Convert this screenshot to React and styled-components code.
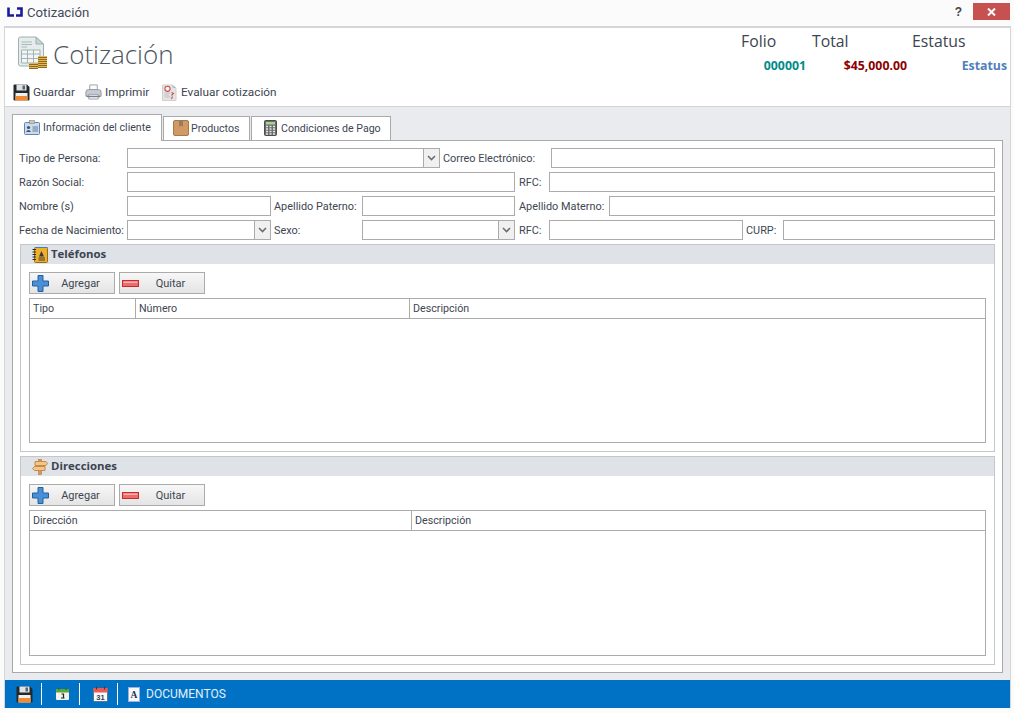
import React from "react";
import styled, { createGlobalStyle } from "styled-components";

const GlobalStyle = createGlobalStyle`
  html, body { margin: 0; padding: 0; background: #fbfbfb; overflow: hidden; }
  * { box-sizing: border-box; }
  body { font-family: Roboto, "Open Sans", "Liberation Sans", sans-serif; font-size: 11px; color: #444; }
`;

const Page = styled.div`
  width: 1014px;
  height: 713px;
  display: flex;
  flex-direction: column;
  background: #fbfbfb;
`;

const TitleBar = styled.div`
  height: 26px;
  display: flex;
  align-items: center;
  padding: 0 4px 2px 7px;
  flex-shrink: 0;
`;

const WindowTitle = styled.span`
  margin-left: 4px;
  font-size: 13.2px;
  color: #3f4a5a;
`;

const HelpButton = styled.span`
  margin-left: auto;
  margin-right: 11px;
  font-weight: 700;
  font-size: 12px;
  color: #444;
  font-family: "Liberation Sans", sans-serif;
`;

const CloseButton = styled.div`
  width: 37px;
  height: 17px;
  margin-bottom: 1px;
  background: #c75050;
  display: flex;
  align-items: center;
  justify-content: center;
`;

const Frame = styled.div`
  flex: 1;
  margin: 0 3px 5px 4px;
  border-top: 2px solid #d6d6d6;
  border-left: 1px solid #d6d6d6;
  border-right: 1px solid #d6d6d6;
  display: flex;
  flex-direction: column;
  min-height: 0;
`;

const Header = styled.div`
  height: 79px;
  background: #fff;
  border-bottom: 1px solid #d4d4d4;
  flex-shrink: 0;
  display: flex;
  flex-direction: column;
`;

const HeaderTop = styled.div`
  height: 50px;
  display: flex;
  justify-content: space-between;
  padding-left: 13px;
`;

const Heading = styled.div`
  display: flex;
  align-items: flex-start;
  gap: 6px;
  padding-top: 8px;
`;

const HeadingText = styled.h1`
  margin: 0;
  font-family: "Open Sans", sans-serif;
  font-size: 26px;
  line-height: 36px;
  font-weight: 300;
  color: #4d5560;
`;

const Summary = styled.div`
  width: 269px;
  padding-top: 3px;
`;

const SummaryRow = styled.div`
  display: flex;
`;

const SummaryLabel = styled.div`
  width: ${(p) => p.$w}px;
  font-family: "Open Sans", sans-serif;
  font-size: 15.8px;
  line-height: 20px;
  color: #3c4450;
`;

const SummaryValue = styled.div`
  width: ${(p) => p.$w}px;
  text-align: right;
  font-family: "Open Sans", sans-serif;
  font-size: 12.3px;
  font-weight: 700;
  line-height: 18px;
  margin-top: 6px;
  color: ${(p) => p.$color};
`;

const Toolbar = styled.div`
  height: 28px;
  display: flex;
  align-items: center;
  padding-left: 8px;
`;

const ToolButton = styled.div`
  width: ${(p) => p.$w}px;
  display: flex;
  align-items: center;
  gap: 3px;
  font-size: 11.8px;
  white-space: nowrap;
  color: #3e4652;
`;

const Content = styled.div`
  flex: 1;
  min-height: 0;
  background: #e9ebef;
  padding: 7px;
  display: flex;
  flex-direction: column;
`;

const Tabs = styled.div`
  display: flex;
  align-items: flex-end;
  height: 27px;
  margin-bottom: -1px;
  position: relative;
  z-index: 1;
`;

const Tab = styled.div`
  width: ${(p) => p.$w}px;
  height: ${(p) => (p.$active ? 27 : 25)}px;
  margin-right: 1px;
  background: #fff;
  border: 1px solid #a9a9a9;
  border-bottom: ${(p) => (p.$active ? "none" : "1px solid #a9a9a9")};
  display: flex;
  align-items: center;
  gap: ${(p) => p.$gap}px;
  padding: 0 0 ${(p) => (p.$active ? 2 : 1)}px ${(p) => p.$pad}px;
  font-size: 10.6px;
  white-space: nowrap;
  color: #3e4652;
`;

const Panel = styled.div`
  flex: 1;
  min-height: 0;
  background: #fff;
  border: 1px solid #a9a9a9;
  padding: 7px 6px 0 6px;
  display: flex;
  flex-direction: column;
`;

const FormRow = styled.div`
  display: flex;
  align-items: center;
  height: 20px;
  margin-bottom: 4px;
`;

const Label = styled.label`
  width: ${(p) => p.$w}px;
  padding-left: ${(p) => p.$pad || 0}px;
  flex-shrink: 0;
  font-size: 10.9px;
  white-space: nowrap;
  color: #3e4652;
`;

const Input = styled.div`
  width: ${(p) => p.$w}px;
  height: 20px;
  flex-shrink: 0;
  background: #fff;
  border: 1px solid #ababab;
`;

const Select = styled(Input)`
  display: flex;
  justify-content: flex-end;
`;

const SelectArrow = styled.div`
  width: 16px;
  height: 100%;
  background: #f0f0f0;
  border-left: 1px solid #ababab;
  display: flex;
  align-items: center;
  justify-content: center;
`;

const Group = styled.section`
  height: ${(p) => p.$h}px;
  margin: 0 1px 4px 1px;
  border: 1px solid #c3c7cc;
  display: flex;
  flex-direction: column;
  flex-shrink: 0;
`;

const GroupHeader = styled.div`
  height: 19px;
  background: #dfe3e8;
  display: flex;
  align-items: center;
  gap: 3px;
  padding-left: 11px;
  font-family: "Open Sans", sans-serif;
  font-size: 11.4px;
  font-weight: 700;
  color: #3c4450;
`;

const GroupTitle = styled.span`
  padding-bottom: 2px;
`;

const GroupBody = styled.div`
  flex: 1;
  min-height: 0;
  padding: 8px;
  display: flex;
  flex-direction: column;
`;

const ButtonRow = styled.div`
  display: flex;
  gap: 4px;
  margin-bottom: 4px;
`;

const Button = styled.button`
  width: 86px;
  height: 22px;
  padding: 0 2px 0 2px;
  border: 1px solid #ababab;
  background: linear-gradient(#f7f7f7, #e4e4e4);
  display: flex;
  align-items: center;
  font-family: inherit;
  font-size: 11px;
  color: #3e4652;
`;

const ButtonText = styled.span`
  flex: 1;
  text-align: center;
`;

const Table = styled.div`
  flex: 1;
  min-height: 0;
  border: 1px solid #ababab;
`;

const TableHead = styled.div`
  height: 20px;
  display: flex;
  border-bottom: 1px solid #ababab;
`;

const HeadCell = styled.div`
  width: ${(p) => p.$w}px;
  flex: ${(p) => (p.$w ? "none" : "1")};
  padding-left: 3px;
  font-size: 10.7px;
  line-height: 20px;
  color: #3e4652;
  border-right: ${(p) => (p.$w ? "1px solid #ababab" : "none")};
`;

const StatusBar = styled.div`
  height: 28px;
  flex-shrink: 0;
  background: #0072c6;
  display: flex;
  align-items: center;
  padding-left: 11px;
`;

const StatusItem = styled.div`
  width: ${(p) => p.$w}px;
  height: 22px;
  display: flex;
  align-items: center;
  padding-left: ${(p) => p.$pad}px;
  border-right: 1px solid #fff;
`;

const StatusText = styled.div`
  margin-left: 10px;
  display: flex;
  align-items: center;
  gap: 6px;
  font-size: 12px;
  color: #e2effa;
`;

const FloppyIcon = ({ size = 17 }) => (
  <svg width={size} height={size} viewBox="0 0 17 17">
    <path d="M0.5 1.5 Q0.5 0.5 1.5 0.5 H14 L16.5 3 V15.5 Q16.5 16.5 15.5 16.5 H1.5 Q0.5 16.5 0.5 15.5 Z" fill="#23282d" />
    <rect x="3.5" y="0.5" width="10" height="6" fill="#dfe3e6" />
    <rect x="9.5" y="1.5" width="2.5" height="4" fill="#59636b" />
    <rect x="2.5" y="9" width="12" height="7.5" fill="#f0f0f0" />
    <rect x="2.5" y="12" width="12" height="4.5" fill="#f08a32" />
  </svg>
);

const PrinterIcon = () => (
  <svg width="17" height="18" viewBox="0 0 18 18">
    <path d="M5 1.5 H13 V7 H5 Z" fill="#fbfbfb" stroke="#9aa2ac" />
    <path d="M1 9 Q1 6.5 3.5 6.5 H14.5 Q17 6.5 17 9 V13.5 H1 Z" fill="#c7ccd3" stroke="#8d95a0" />
    <path d="M4 11.5 H14 V16.5 H4 Z" fill="#f5f5f5" stroke="#9aa2ac" />
    <rect x="2" y="13" width="14" height="1.5" fill="#79818c" />
  </svg>
);

const EvaluateIcon = () => (
  <svg width="16" height="17" viewBox="0 0 16 17">
    <path d="M0.5 1 H10.5 L14 4 V16.5 H0.5 Z" fill="#e4e4e4" stroke="#d0d0d0" />
    <path d="M10.5 1 V4 H14" fill="#bdbdbd" />
    <circle cx="5.5" cy="4.8" r="2.6" fill="#f4f4f4" stroke="#c8504a" strokeWidth="1.1" />
    <path d="M2.5 9 H8 M2.5 11 H7 M2.5 13 H8.5" stroke="#c0c0c0" />
    <path d="M9.5 8.5 L11.5 9.5 L9.5 11.5 M10.5 12.5 L9.5 15" fill="none" stroke="#c8504a" strokeWidth="1.1" />
  </svg>
);

const coinRows = [
  [20, 20], [20, 22], [20, 24], [20, 26], [20, 28], [20, 30],
  [11, 27], [11, 29], [11, 31],
];

const QuoteIcon = () => (
  <svg width="29" height="33" viewBox="0 0 29 33">
    <path d="M0.5 3 Q0.5 1 2.5 1 H18 L25.5 8 V28 Q25.5 30 23.5 30 H2.5 Q0.5 30 0.5 28 Z" fill="#e6ecec" stroke="#9fb0b0" />
    <path d="M18 1 V8 H25.5 Z" fill="#c9d5d5" stroke="#9fb0b0" />
    <path d="M3.5 6 H14 M3.5 8.5 H14 M3.5 11 H9" stroke="#a9b8b8" />
    <path d="M3.5 14 H22 V27 H3.5 Z M3.5 18 H22 M3.5 22.5 H22 M9.5 14 V27 M15.5 14 V27" fill="#f2f6f6" stroke="#a3b2b2" />
    {coinRows.map(([x, y]) => (
      <g key={`${x}-${y}`}>
        <rect x={x} y={y} width="9" height="2" fill="#e2b955" />
        <rect x={x} y={y + 1} width="9" height="1" fill="#8f6a1e" />
      </g>
    ))}
  </svg>
);

const LogoIcon = () => (
  <svg width="16" height="11" viewBox="0 0 16 11">
    <path d="M1.5 0.5 V8.5 H7 M10 1.5 H14.5 V8.5 H9" fill="none" stroke="#1a1a9a" strokeWidth="2.6" />
  </svg>
);

const IdCardIcon = () => (
  <svg width="16" height="15" viewBox="0 0 16 15">
    <rect x="0.5" y="2.5" width="15" height="12" rx="1" fill="#c9dcf0" stroke="#5f86b3" />
    <rect x="5.5" y="0.5" width="5" height="3" fill="#c8c8b0" stroke="#7f8a8a" strokeWidth="0.6" />
    <circle cx="4.5" cy="7.5" r="1.6" fill="#44505e" />
    <path d="M2 12 Q4.5 8 7 12 Z" fill="#44505e" />
    <path d="M8.5 7 H14 M8.5 9 H14 M8.5 11 H14" stroke="#6a7b90" />
  </svg>
);

const BoxIcon = () => (
  <svg width="16" height="16" viewBox="0 0 16 16">
    <rect x="0.5" y="0.5" width="15" height="15" rx="1.5" fill="#cf9a66" stroke="#a8784a" />
    <path d="M6 0.5 H10 V7 L8 5.5 L6 7 Z" fill="#9d7a5a" />
  </svg>
);

const CalculatorIcon = () => (
  <svg width="13" height="16" viewBox="0 0 13 16">
    <rect x="0.5" y="0.5" width="12" height="15" rx="1" fill="#6b6f6e" stroke="#4a4d4c" />
    <rect x="2" y="2" width="9" height="2.5" fill="#a7d48e" />
    <path d="M2 6.5 H4 M5.5 6.5 H7.5 M9 6.5 H11 M2 9 H4 M5.5 9 H7.5 M9 9 H11 M2 11.5 H4 M5.5 11.5 H7.5 M9 11.5 H11 M2 14 H4 M5.5 14 H7.5 M9 14 H11" stroke="#e5e5e5" strokeWidth="1.4" />
  </svg>
);

const AddressBookIcon = () => (
  <svg width="16" height="16" viewBox="0 0 16 16">
    <rect x="2.5" y="0.5" width="13" height="15" rx="1" fill="#eeb02f" stroke="#9a6d14" />
    <path d="M3 0.5 H15.5" stroke="#3b82c4" />
    <path d="M0.5 2.5 H4 M0.5 5 H4 M0.5 7.5 H4 M0.5 10 H4 M0.5 12.5 H4" stroke="#2b2b2b" />
    <path d="M9.5 4 L12 9.5 H7 Z" fill="#3a3a3a" />
    <path d="M6.5 11 H13 M6.5 13 H13" stroke="#3a3a3a" />
  </svg>
);

const SignpostIcon = () => (
  <svg width="16" height="16" viewBox="0 0 16 16">
    <rect x="6.5" y="0.5" width="3" height="15" fill="#d99a58" stroke="#b37534" strokeWidth="0.6" />
    <path d="M3 2.5 H14 L15.5 4.5 L14 6.5 H3 Z" fill="#f0c58e" stroke="#c98a45" />
    <path d="M13 7.5 H2.5 L0.5 9.5 L2.5 11.5 H13 Z" fill="#f0c58e" stroke="#c98a45" />
  </svg>
);

const PlusIcon = () => (
  <svg width="17" height="17" viewBox="0 0 17 17">
    <path d="M6 0.5 H11 V6 H16.5 V11 H11 V16.5 H6 V11 H0.5 V6 H6 Z" fill="#4a90d9" stroke="#245f9f" />
  </svg>
);

const MinusIcon = () => (
  <svg width="17" height="7" viewBox="0 0 17 7">
    <rect x="0.5" y="0.5" width="16" height="6" fill="#ee6b6b" stroke="#c92a2a" />
    <rect x="1.5" y="1.5" width="14" height="1.5" fill="#f7b3b3" />
  </svg>
);

const ChevronIcon = () => (
  <svg width="9" height="6" viewBox="0 0 9 6">
    <path d="M1 1 L4.5 4.5 L8 1" fill="none" stroke="#6a6f75" strokeWidth="1.6" />
  </svg>
);

const GreenCalendarIcon = () => (
  <svg width="15" height="14" viewBox="0 0 15 14">
    <path d="M1 3 H14 V12 Q14 13 13 13 H2 Q1 13 1 12 Z" fill="#f3f3ee" />
    <rect x="1" y="2" width="13" height="3.5" fill="#5ba83c" />
    <path d="M4 0.5 V3 M11 0.5 V3" stroke="#2f6a20" strokeWidth="1.2" />
    <path d="M6.5 7 H8.5 V11 M6 11 H9.5" fill="none" stroke="#222" strokeWidth="1.2" />
  </svg>
);

const RedCalendarIcon = () => (
  <svg width="15" height="16" viewBox="0 0 15 16">
    <rect x="0.5" y="2" width="14" height="13.5" rx="1" fill="#fafafa" stroke="#4a5a6c" strokeWidth="0.7" />
    <rect x="0.5" y="2" width="14" height="4.5" fill="#e85c5c" />
    <path d="M3.5 0.5 V3.5 M11.5 0.5 V3.5" stroke="#6b2e2e" strokeWidth="1.2" />
    <text x="7.5" y="14" textAnchor="middle" fontSize="7.5" fontWeight="700" fontFamily="Liberation Sans, sans-serif" fill="#2c3e50">31</text>
  </svg>
);

const LetterIcon = () => (
  <svg width="12" height="15" viewBox="0 0 12 15">
    <rect x="0.5" y="0.5" width="11" height="14" fill="#f5f7fb" stroke="#9db2d6" />
    <text x="6" y="11" textAnchor="middle" fontSize="9.5" fontWeight="700" fontFamily="Liberation Serif, serif" fill="#24324a">A</text>
  </svg>
);

const PhoneColumns = [106, 274, 0];
const AddressColumns = [382, 0];

const DetailGroup = ({ title, icon, height, columns, headers }) => (
  <Group $h={height}>
    <GroupHeader>
      {icon}
      <GroupTitle>{title}</GroupTitle>
    </GroupHeader>
    <GroupBody>
      <ButtonRow>
        <Button>
          <PlusIcon />
          <ButtonText>Agregar</ButtonText>
        </Button>
        <Button>
          <MinusIcon />
          <ButtonText>Quitar</ButtonText>
        </Button>
      </ButtonRow>
      <Table>
        <TableHead>
          {headers.map((h, i) => (
            <HeadCell key={h} $w={columns[i]}>
              {h}
            </HeadCell>
          ))}
        </TableHead>
      </Table>
    </GroupBody>
  </Group>
);

const Dropdown = ({ w }) => (
  <Select $w={w}>
    <SelectArrow>
      <ChevronIcon />
    </SelectArrow>
  </Select>
);

export default function App() {
  return (
    <Page>
      <GlobalStyle />
      <TitleBar>
        <LogoIcon />
        <WindowTitle>Cotización</WindowTitle>
        <HelpButton>?</HelpButton>
        <CloseButton>
          <svg width="9" height="8" viewBox="0 0 9 8">
            <path d="M1 0.5 L8 7.5 M8 0.5 L1 7.5" stroke="#fff" strokeWidth="2" />
          </svg>
        </CloseButton>
      </TitleBar>
      <Frame>
        <Header>
          <HeaderTop>
            <Heading>
              <QuoteIcon />
              <HeadingText>Cotización</HeadingText>
            </Heading>
            <Summary>
              <SummaryRow>
                <SummaryLabel $w={71}>Folio</SummaryLabel>
                <SummaryLabel $w={100}>Total</SummaryLabel>
                <SummaryLabel $w={96}>Estatus</SummaryLabel>
              </SummaryRow>
              <SummaryRow>
                <SummaryValue $w={65} $color="#008b8b">000001</SummaryValue>
                <SummaryValue $w={101} $color="#8b0000">$45,000.00</SummaryValue>
                <SummaryValue $w={100} $color="#4f81bd">Estatus</SummaryValue>
              </SummaryRow>
            </Summary>
          </HeaderTop>
          <Toolbar>
            <ToolButton $w={72}><FloppyIcon />Guardar</ToolButton>
            <ToolButton $w={77}><PrinterIcon />Imprimir</ToolButton>
            <ToolButton $w={120}><EvaluateIcon />Evaluar cotización</ToolButton>
          </Toolbar>
        </Header>
        <Content>
          <Tabs>
            <Tab $w={150} $active $pad={11} $gap={3}><IdCardIcon />Información del cliente</Tab>
            <Tab $w={87} $pad={9} $gap={2}><BoxIcon />Productos</Tab>
            <Tab $w={140} $pad={12} $gap={4}><CalculatorIcon />Condiciones de Pago</Tab>
          </Tabs>
          <Panel>
            <FormRow>
              <Label $w={108}>Tipo de Persona:</Label>
              <Dropdown w={313} />
              <Label $w={111} $pad={3}>Correo Electrónico:</Label>
              <Input $w={444} />
            </FormRow>
            <FormRow>
              <Label $w={108}>Razón Social:</Label>
              <Input $w={388} />
              <Label $w={34} $pad={4}>RFC:</Label>
              <Input $w={446} />
            </FormRow>
            <FormRow>
              <Label $w={108}>Nombre (s)</Label>
              <Input $w={144} />
              <Label $w={91} $pad={3}>Apellido Paterno:</Label>
              <Input $w={153} />
              <Label $w={94} $pad={4}>Apellido Materno:</Label>
              <Input $w={386} />
            </FormRow>
            <FormRow>
              <Label $w={108}>Fecha de Nacimiento:</Label>
              <Dropdown w={144} />
              <Label $w={91} $pad={3}>Sexo:</Label>
              <Dropdown w={153} />
              <Label $w={34} $pad={4}>RFC:</Label>
              <Input $w={194} />
              <Label $w={40} $pad={3}>CURP:</Label>
              <Input $w={212} />
            </FormRow>
            <DetailGroup
              title="Teléfonos"
              icon={<AddressBookIcon />}
              height={208}
              columns={PhoneColumns}
              headers={["Tipo", "Número", "Descripción"]}
            />
            <DetailGroup
              title="Direcciones"
              icon={<SignpostIcon />}
              height={209}
              columns={AddressColumns}
              headers={["Dirección", "Descripción"]}
            />
          </Panel>
        </Content>
        <StatusBar>
          <StatusItem $w={26} $pad={0}><FloppyIcon /></StatusItem>
          <StatusItem $w={38} $pad={13}><GreenCalendarIcon /></StatusItem>
          <StatusItem $w={38} $pad={13}><RedCalendarIcon /></StatusItem>
          <StatusText><LetterIcon />DOCUMENTOS</StatusText>
        </StatusBar>
      </Frame>
    </Page>
  );
}
